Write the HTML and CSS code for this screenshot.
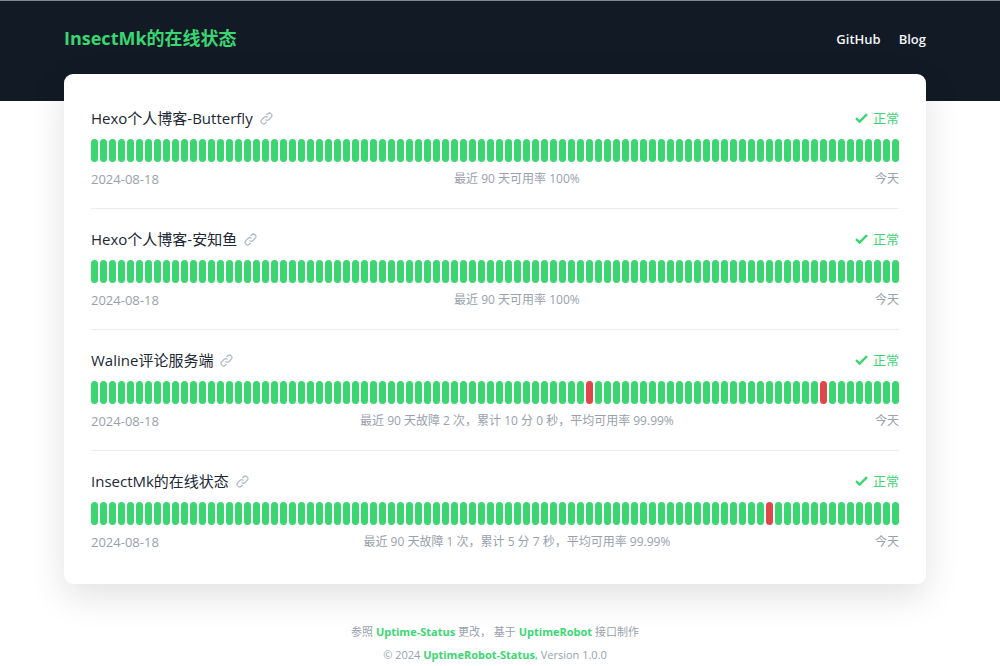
FILE: index.html
```html
<!DOCTYPE html>
<html lang="zh-CN">
<head>
<meta charset="utf-8">
<meta name="viewport" content="width=device-width, initial-scale=1">
<title>InsectMk的在线状态</title>
<link rel="stylesheet" href="styles.css">
</head>
<body>
<svg class="sprite" aria-hidden="true">
  <symbol id="icon-link" viewBox="0 0 24 24">
    <path d="M10.2 13.8a4.6 4.6 0 0 0 6.5 0l4-4a4.6 4.6 0 0 0-6.5-6.5l-2.4 2.4M13.8 10.2a4.6 4.6 0 0 0-6.5 0l-4 4a4.6 4.6 0 0 0 6.5 6.5l2.4-2.4" fill="none" stroke="currentColor" stroke-width="2.3"/>
  </symbol>
  <symbol id="icon-check" viewBox="0 0 13 10">
    <path d="M1 5.2 4.6 8.6 12 1.2" fill="none" stroke="currentColor" stroke-width="2.4"/>
  </symbol>
</svg>
<header class="header">
  <div class="header-inner">
    <h1 class="brand">InsectMk的在线状态</h1>
    <nav class="nav">
      <a class="nav-link" href="#github">GitHub</a>
      <a class="nav-link" href="#blog">Blog</a>
    </nav>
  </div>
</header>
<main class="main">
  <div class="card">
    <section class="site">
      <div class="meta">
        <h2 class="name">Hexo个人博客-Butterfly</h2>
        <a class="link" href="#butterfly" aria-label="Hexo个人博客-Butterfly"><svg class="link-icon"><use href="#icon-link"/></svg></a>
        <span class="status"><svg class="check"><use href="#icon-check"/></svg>正常</span>
      </div>
      <div class="timeline"></div>
      <div class="summary"><span class="since">2024-08-18</span><span>最近 90 天可用率 100%</span><span>今天</span></div>
    </section>
    <section class="site">
      <div class="meta">
        <h2 class="name">Hexo个人博客-安知鱼</h2>
        <a class="link" href="#anzhiyu" aria-label="Hexo个人博客-安知鱼"><svg class="link-icon"><use href="#icon-link"/></svg></a>
        <span class="status"><svg class="check"><use href="#icon-check"/></svg>正常</span>
      </div>
      <div class="timeline"></div>
      <div class="summary"><span class="since">2024-08-18</span><span>最近 90 天可用率 100%</span><span>今天</span></div>
    </section>
    <section class="site">
      <div class="meta">
        <h2 class="name">Waline评论服务端</h2>
        <a class="link" href="#waline" aria-label="Waline评论服务端"><svg class="link-icon"><use href="#icon-link"/></svg></a>
        <span class="status"><svg class="check"><use href="#icon-check"/></svg>正常</span>
      </div>
      <div class="timeline" data-down="55,81"></div>
      <div class="summary"><span class="since">2024-08-18</span><span>最近 90 天故障 2 次，累计 10 分 0 秒，平均可用率 99.99%</span><span>今天</span></div>
    </section>
    <section class="site">
      <div class="meta">
        <h2 class="name">InsectMk的在线状态</h2>
        <a class="link" href="#status" aria-label="InsectMk的在线状态"><svg class="link-icon"><use href="#icon-link"/></svg></a>
        <span class="status"><svg class="check"><use href="#icon-check"/></svg>正常</span>
      </div>
      <div class="timeline" data-down="75"></div>
      <div class="summary"><span class="since">2024-08-18</span><span>最近 90 天故障 1 次，累计 5 分 7 秒，平均可用率 99.99%</span><span>今天</span></div>
    </section>
  </div>
  <footer class="footer">
    <p class="footer-line">参照 <a class="footer-link" href="#uptime-status">Uptime-Status</a> 更改， 基于 <a class="footer-link" href="#uptimerobot">UptimeRobot</a> 接口制作</p>
    <p class="footer-line">© 2024 <a class="footer-link" href="#uptimerobot-status">UptimeRobot-Status</a><span class="comma">,</span> Version 1.0.0</p>
  </footer>
</main>
<script src="timeline.js"></script>
</body>
</html>
```
FILE: styles.css
```css
* {
  box-sizing: border-box;
}

body {
  margin: 0;
  background: #fff;
  color: #202833;
  font-family: "Open Sans", "Noto Sans CJK SC", sans-serif;
  font-size: 12px;
}

h1, h2, p {
  margin: 0;
}

a {
  text-decoration: none;
}

.sprite {
  display: none;
}

.header {
  height: 101px;
  padding: 23px 74px 0 64px;
  border-top: 1px solid #7d8a8d;
  background: #121a25;
}

.header-inner {
  display: flex;
  justify-content: space-between;
  align-items: flex-end;
}

.brand {
  color: #3bd672;
  font-size: 18px;
  line-height: 28px;
  font-weight: 700;
}

.nav {
  display: flex;
  gap: 18px;
}

.nav-link {
  color: #f2f4f6;
  font-size: 13px;
  line-height: 26px;
  font-weight: 600;
}

.main {
  margin-top: -27px;
  padding: 0 74px 0 64px;
}

.card {
  padding: 14px 27px 13px;
  border-radius: 9px;
  background: #fff;
  box-shadow: 0 12px 36px rgba(0, 0, 0, 0.12);
}

.site {
  padding: 20px 0 19px;
}

.site + .site {
  border-top: 1px solid #ebedef;
}

.meta {
  display: flex;
  align-items: center;
  gap: 7px;
  line-height: 20px;
}

.name {
  font-size: 15px;
  line-height: 20px;
  font-weight: 400;
}

.link {
  display: flex;
  color: #b4bbc4;
}

.link-icon {
  width: 13px;
  height: 13px;
}

.status {
  display: flex;
  align-items: center;
  gap: 5px;
  margin-left: auto;
  color: #3bd672;
  font-size: 13px;
}

.check {
  width: 13px;
  height: 10px;
}

.timeline {
  display: flex;
  gap: 2px;
  height: 23px;
  margin: 11px 0 7px;
}

.day {
  flex: 1;
  border-radius: 4px;
  background: #3bd672;
}

.day-down {
  background: #de484a;
}

.summary {
  display: flex;
  justify-content: space-between;
  color: #98a1ac;
  line-height: 20px;
}

.since {
  font-size: 13px;
}

.footer {
  padding-top: 36px;
  color: #98a1ac;
  font-size: 11px;
  line-height: 23px;
  text-align: center;
}

.footer-link {
  color: #3bd672;
  font-weight: 700;
}

.comma {
  color: #3bd672;
}
```
FILE: timeline.js
```js
const DAYS = 90;

document.querySelectorAll(".timeline").forEach((timeline) => {
  const down = (timeline.dataset.down || "").split(",");
  for (let i = 0; i < DAYS; i++) {
    const day = document.createElement("span");
    day.className = down.includes(String(i)) ? "day day-down" : "day";
    timeline.append(day);
  }
});
```
